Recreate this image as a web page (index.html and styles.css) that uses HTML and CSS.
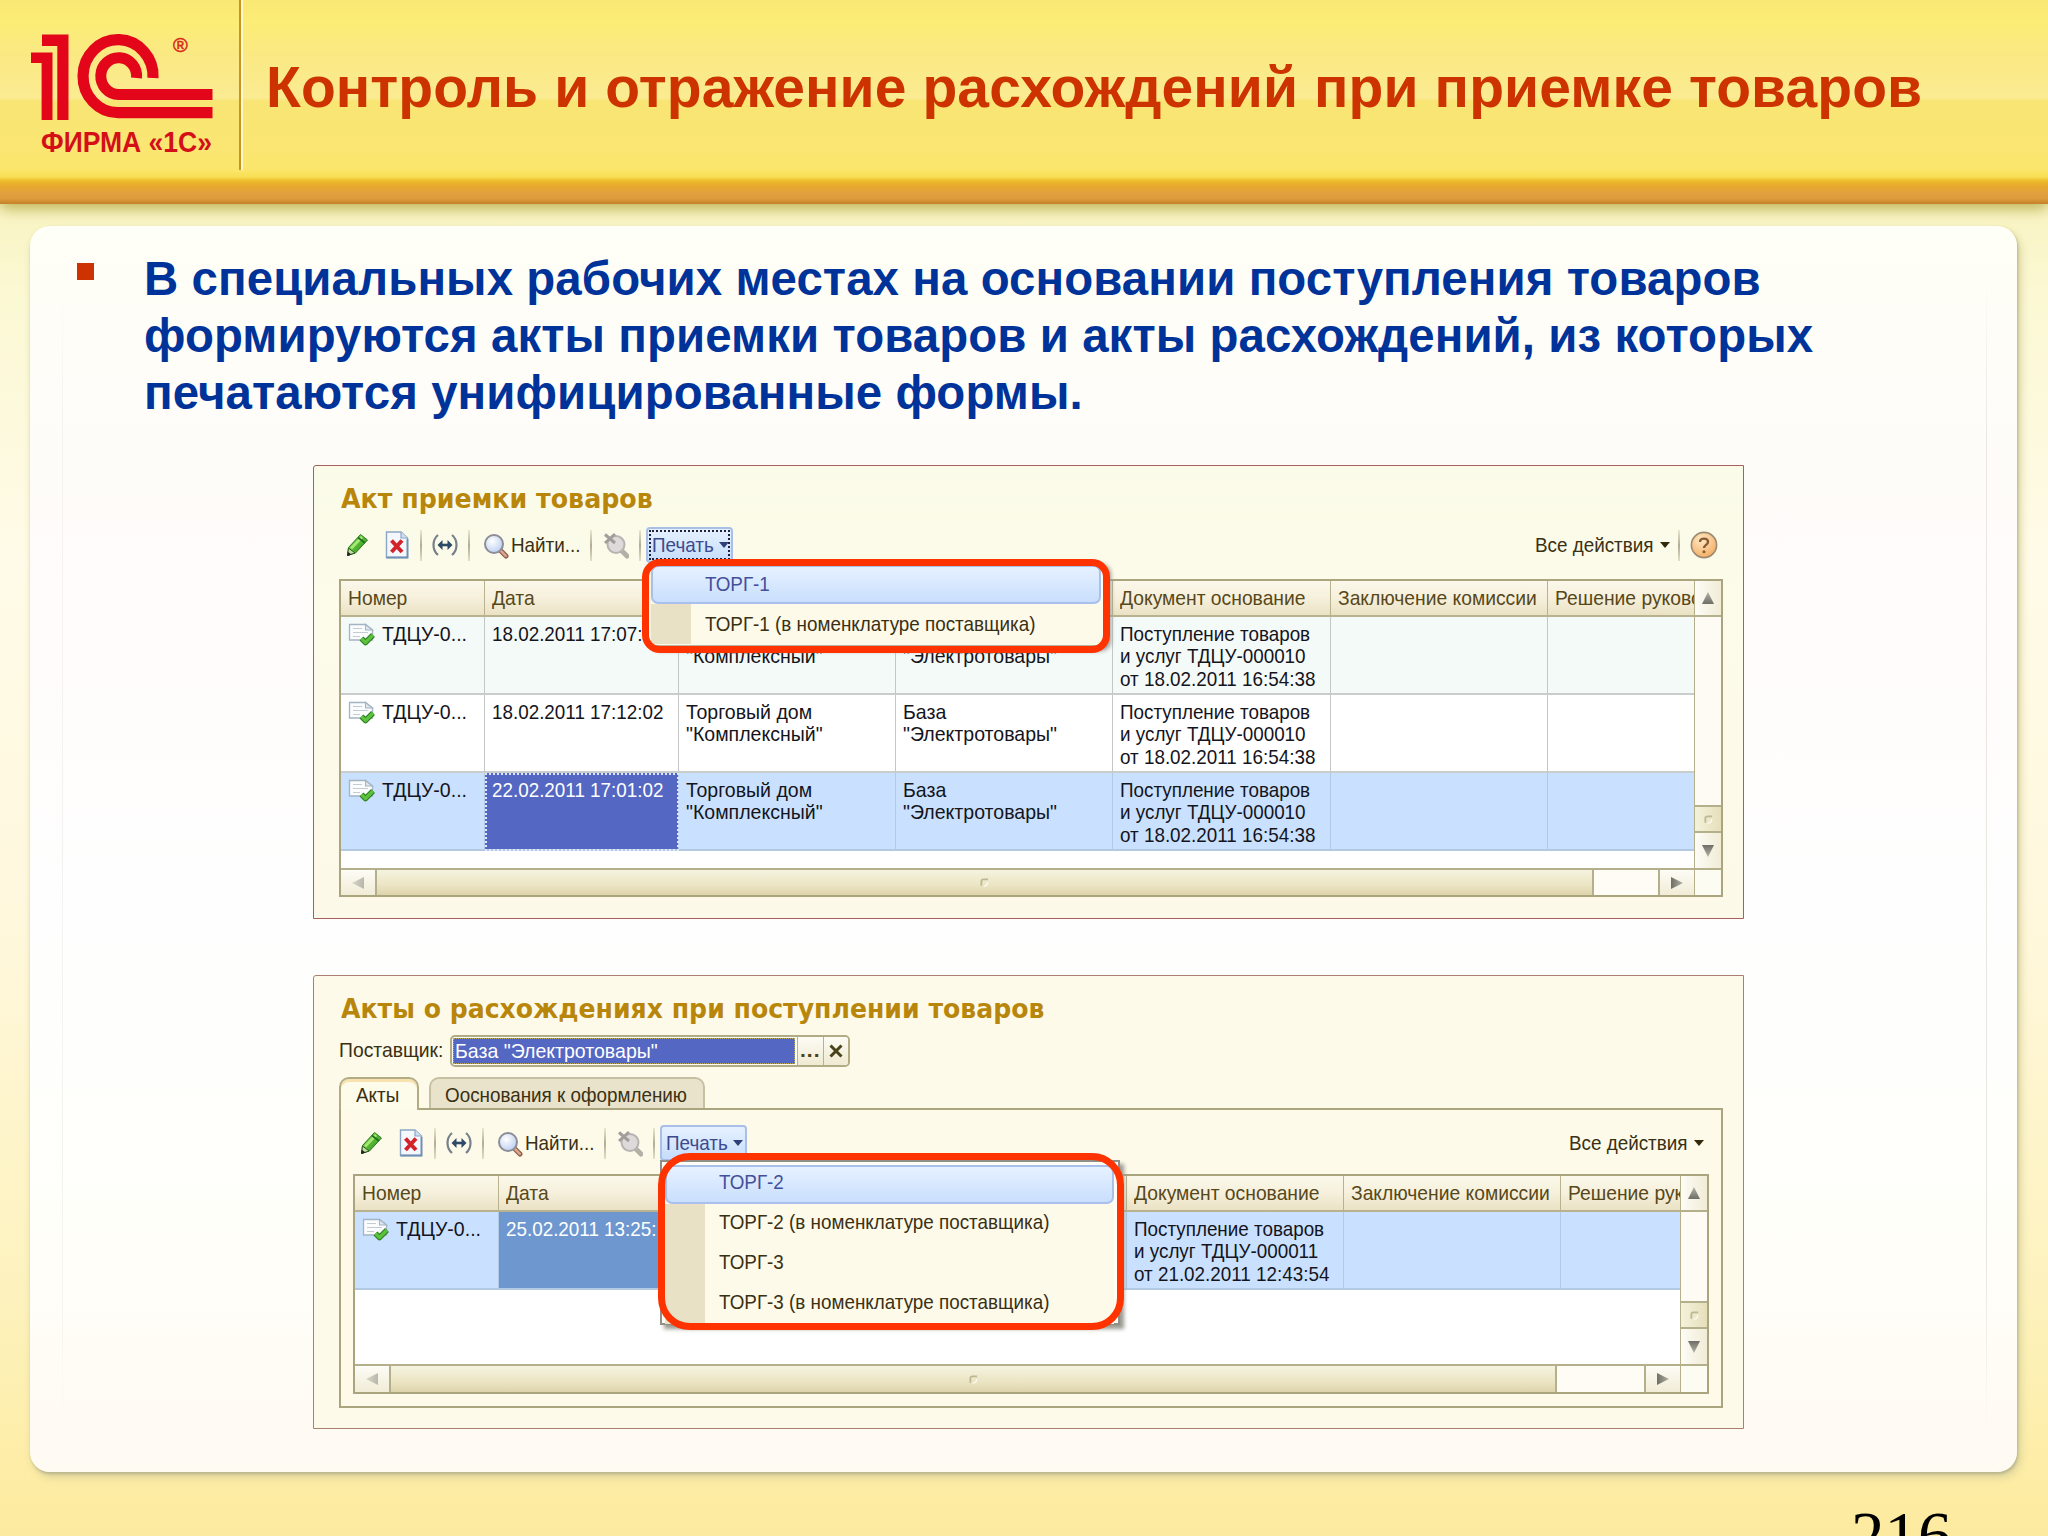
FILE: index.html
```html
<!DOCTYPE html>
<html lang="ru">
<head>
<meta charset="utf-8">
<title>Контроль и отражение расхождений при приемке товаров</title>
<link rel="stylesheet" href="styles.css">
</head>
<body>
<svg class="defs" width="0" height="0" aria-hidden="true">
  <defs>
    <linearGradient id="g-pencil" x1="0" y1="0" x2="1" y2="1"><stop offset="0" stop-color="#8fe04e"/><stop offset="1" stop-color="#1f8a1c"/></linearGradient>
    <radialGradient id="g-lens" cx=".4" cy=".35" r=".7"><stop offset="0" stop-color="#ffffff"/><stop offset="1" stop-color="#b9cdf0"/></radialGradient>
    <radialGradient id="g-help" cx=".4" cy=".3" r=".8"><stop offset="0" stop-color="#ffe9c4"/><stop offset="1" stop-color="#f3a75a"/></radialGradient>
    <linearGradient id="g-tri" x1="0" y1="0" x2="1" y2="0"><stop offset="0" stop-color="#6e6e66"/><stop offset="1" stop-color="#b4b3a6"/></linearGradient>
  </defs>
  <symbol id="i-pencil" viewBox="0 0 26 28">
    <path d="M2.500 24.500 L3.500 16.500 L15.500 3.500 L22.500 9 L10.500 22 Z" fill="url(#g-pencil)" stroke="#2c7a22" stroke-width="1"/>
    <path d="M6 17.500 L17 6" stroke="#a4ea74" stroke-width="2.600"/>
    <path d="M13 6.500 L20 12" stroke="#1c6e1a" stroke-width="1.600"/>
    <path d="M2.500 24.500 L3.500 17 L10 22 Z" fill="#bfe09a" stroke="#2f5b25" stroke-width="1"/>
    <path d="M2.200 25 L2.800 20.800 L6.500 23.500 Z" fill="#222"/>
  </symbol>
  <symbol id="i-delete" viewBox="0 0 26 28">
    <path d="M2.500 1 H17 L23.500 7 V26.500 H2.500 Z" fill="#f4f8fd" stroke="#8ba6c4" stroke-width="1.4"/>
    <path d="M17 1 V7 H23.500" fill="#cfe0f2" stroke="#8ba6c4" stroke-width="1.2"/>
    <path d="M2.500 26.500 H23.500 V8" fill="none" stroke="#6f90b4" stroke-width="1.8"/>
    <path d="M7.500 9.500 L18 21 M18 9.500 L7.500 21" stroke="#d2232a" stroke-width="4"/>
  </symbol>
  <symbol id="i-width" viewBox="0 0 26 28">
    <path d="M6 4 C0 9 0 19 6 24 M20 4 C26 9 26 19 20 24" fill="none" stroke="#77808a" stroke-width="2.200"/>
    <path d="M8 14 H18" stroke="#2d4a66" stroke-width="2.600"/>
    <path d="M10.500 9 L5.500 14 L10.500 19 Z M15.500 9 L20.500 14 L15.500 19 Z" fill="#2d4a66"/>
  </symbol>
  <symbol id="i-find" viewBox="0 0 26 28">
    <path d="M17 19 L23 25" stroke="#8a5f4b" stroke-width="5" stroke-linecap="round"/>
    <path d="M17.500 19.500 L22.800 24.800" stroke="#dba68b" stroke-width="2.600" stroke-linecap="round"/>
    <circle cx="11" cy="13" r="9" fill="url(#g-lens)" stroke="#8d8d98" stroke-width="2"/>
  </symbol>
  <symbol id="i-unfind" viewBox="0 0 26 28">
    <path d="M18 19 L24 25" stroke="#b4b0a8" stroke-width="5" stroke-linecap="round"/>
    <circle cx="13" cy="13.500" r="8.500" fill="#dedada" stroke="#b7b3b1" stroke-width="2"/>
    <path d="M2 3.500 L12 12 M12 3 L2 12" stroke="#a19d9b" stroke-width="3"/>
  </symbol>
  <symbol id="i-doc" viewBox="0 0 28 24">
    <path d="M1.500 1.500 H17.500 L24.500 7 V17 H1.500 Z" fill="#fbfcfd" stroke="#a3b4c4" stroke-width="1.300"/>
    <path d="M17.500 1.500 V7 H24.500 Z" fill="#dfe8f0" stroke="#a3b4c4" stroke-width="1.100"/>
    <path d="M5 5.500 H14 M5 9.500 H20 M5 13.500 H12" stroke="#c4ccd2" stroke-width="1.200"/>
    <path d="M13.500 15.500 L17.500 19.500 L25 12" fill="none" stroke="#2c7d21" stroke-width="5.500" stroke-linejoin="round"/>
    <path d="M13.500 15.500 L17.500 19.500 L25 12" fill="none" stroke="#5cc23e" stroke-width="3.200" stroke-linejoin="round"/>
  </symbol>
  <symbol id="i-help" viewBox="0 0 28 28">
    <circle cx="14" cy="14" r="12.600" fill="url(#g-help)" stroke="#9c8a72" stroke-width="1.600"/>
    <path d="M10 11 C10 6.500 18 6.500 18 11 C18 14 14 13.800 14 17" fill="none" stroke="#8a5a30" stroke-width="2.400"/>
    <circle cx="14" cy="20.800" r="1.500" fill="#8a5a30"/>
  </symbol>
  <symbol id="i-tri" viewBox="0 0 12 12"><path d="M0 0 L12 6 L0 12 Z" fill="url(#g-tri)"/></symbol>
  <symbol id="i-grip" viewBox="0 0 10 10"><path d="M1.500 8.500 V4 Q1.500 1.500 4 1.500 H9" fill="none" stroke="#bdb893" stroke-width="2"/><path d="M4 9 Q8.500 9 8.500 4.500" fill="none" stroke="#fbfaf0" stroke-width="1.500"/></symbol>
</svg>

<header class="header">
  <div class="brand">
    <svg class="logo" viewBox="0 0 240 170" width="240" height="170">
      <path d="M42 34.500 H68.500 V120 H57.300 V46 H42 Z M31 52.500 H52.500 V120 H41.600 V63 H31 Z" fill="#e3061a"/>
      <path d="M153 78 A35 36.500 0 1 0 118 112.700 H212.500" fill="none" stroke="#e3061a" stroke-width="11.200"/>
      <path d="M136.500 78 A17.900 18.400 0 1 0 118.500 94.500 H212.500" fill="none" stroke="#e3061a" stroke-width="11"/>
      <text x="173" y="52" class="logo-reg">®</text>
      <text x="41" y="152" class="logo-text" textLength="171" lengthAdjust="spacingAndGlyphs">ФИРМА «1С»</text>
    </svg>
  </div>
  <h1 class="title">Контроль и отражение расхождений при приемке товаров</h1>
</header>

<main class="card">
  <div class="lead">
    <span class="bullet"></span>
    <p class="lead-text">В специальных рабочих местах на основании поступления товаров<br>формируются акты приемки товаров и акты расхождений, из которых<br>печатаются унифицированные формы.</p>
  </div>

  <section class="panel">
    <h2 class="panel-title">Акт приемки товаров</h2>
    <div class="toolbar">
      <svg class="ico"><use href="#i-pencil"/></svg>
      <svg class="ico"><use href="#i-delete"/></svg>
      <i class="sep"></i>
      <svg class="ico"><use href="#i-width"/></svg>
      <i class="sep"></i>
      <svg class="ico"><use href="#i-find"/></svg>
      <span class="n">Найти...</span>
      <i class="sep"></i>
      <svg class="ico"><use href="#i-unfind"/></svg>
      <i class="sep"></i>
      <span class="print print-focus"><span class="n">Печать</span><i class="caret"></i></span>
      <div class="actions"><span class="n actions-text">Все действия</span><i class="caret dark"></i><i class="sep sep-help"></i><svg class="help"><use href="#i-help"/></svg></div>
    </div>
    <div class="table table-a">
      <div class="grid">
        <div class="row head"><div class="cell"><span class="n">Номер</span></div><div class="cell"><span class="n">Дата</span></div><div class="cell"></div><div class="cell"></div><div class="cell"><span class="n">Документ основание</span></div><div class="cell"><span class="n">Заключение комиссии</span></div><div class="cell"><span class="n">Решение руководителя</span></div></div>
        <div class="row alt"><div class="cell first"><svg class="doc"><use href="#i-doc"/></svg><span class="n wide">ТДЦУ-0...</span></div><div class="cell"><span class="n">18.02.2011 17:07:</span></div><div class="cell"><span class="n wide"><br>"Комплексный"</span></div><div class="cell"><span class="n wide"><br>"Электротовары"</span></div><div class="cell"><span class="n">Поступление товаров<br>и услуг ТДЦУ-000010<br>от 18.02.2011 16:54:38</span></div><div class="cell"></div><div class="cell"></div></div>
        <div class="row"><div class="cell first"><svg class="doc"><use href="#i-doc"/></svg><span class="n wide">ТДЦУ-0...</span></div><div class="cell"><span class="n">18.02.2011 17:12:02</span></div><div class="cell"><span class="n wide">Торговый дом<br>"Комплексный"</span></div><div class="cell"><span class="n wide">База<br>"Электротовары"</span></div><div class="cell"><span class="n">Поступление товаров<br>и услуг ТДЦУ-000010<br>от 18.02.2011 16:54:38</span></div><div class="cell"></div><div class="cell"></div></div>
        <div class="row sel"><div class="cell first"><svg class="doc"><use href="#i-doc"/></svg><span class="n wide">ТДЦУ-0...</span></div><div class="cell active"><span class="n">22.02.2011 17:01:02</span></div><div class="cell"><span class="n wide">Торговый дом<br>"Комплексный"</span></div><div class="cell"><span class="n wide">База<br>"Электротовары"</span></div><div class="cell"><span class="n">Поступление товаров<br>и услуг ТДЦУ-000010<br>от 18.02.2011 16:54:38</span></div><div class="cell"></div><div class="cell"></div></div>
      </div>
      <div class="vscroll"><span class="btn"><svg class="tri up"><use href="#i-tri"/></svg></span><span class="track"></span><span class="thumb"><svg class="grip"><use href="#i-grip"/></svg></span><span class="btn down-btn"><svg class="tri down"><use href="#i-tri"/></svg></span></div>
      <div class="hscroll"><span class="btn"><svg class="tri left"><use href="#i-tri"/></svg></span><span class="thumb"><svg class="grip"><use href="#i-grip"/></svg></span><span class="track"></span><span class="btn"><svg class="tri"><use href="#i-tri"/></svg></span></div>
      <div class="corner"></div>
    </div>
    <div class="menu menu-a">
      <div class="item on"><span class="n">ТОРГ-1</span></div>
      <div class="item"><span class="n">ТОРГ-1 (в номенклатуре поставщика)</span></div>
    </div>
    <div class="ring ring-a"></div>
  </section>

  <section class="panel panel-b">
    <h2 class="panel-title">Акты о расхождениях при поступлении товаров</h2>
    <div class="field">
      <span class="n label">Поставщик:</span>
      <div class="input"><span class="value"><span class="n wide">База "Электротовары"</span></span><span class="pick">...</span><span class="clear"><svg width="14" height="14" viewBox="0 0 14 14"><path d="M1.500 1.500 L12.500 12.500 M12.500 1.500 L1.500 12.500" stroke="#4a421a" stroke-width="3"/></svg></span></div>
    </div>
    <div class="tabs"><span class="tab tab-on"><span class="n">Акты</span></span><span class="tab tab-off"><span class="n">Ооснования к оформлению</span></span></div>
    <div class="frame">
      <div class="toolbar">
        <svg class="ico"><use href="#i-pencil"/></svg>
        <svg class="ico"><use href="#i-delete"/></svg>
        <i class="sep"></i>
        <svg class="ico"><use href="#i-width"/></svg>
        <i class="sep"></i>
        <svg class="ico"><use href="#i-find"/></svg>
        <span class="n">Найти...</span>
        <i class="sep"></i>
        <svg class="ico"><use href="#i-unfind"/></svg>
        <i class="sep"></i>
        <span class="print"><span class="n">Печать</span><i class="caret"></i></span>
        <div class="actions"><span class="n actions-text">Все действия</span><i class="caret dark"></i></div>
      </div>
      <div class="table table-b">
        <div class="grid">
          <div class="row head"><div class="cell"><span class="n">Номер</span></div><div class="cell"><span class="n">Дата</span></div><div class="cell"></div><div class="cell"></div><div class="cell"><span class="n">Документ основание</span></div><div class="cell"><span class="n">Заключение комиссии</span></div><div class="cell"><span class="n">Решение руководителя</span></div></div>
          <div class="row sel"><div class="cell first"><svg class="doc"><use href="#i-doc"/></svg><span class="n wide">ТДЦУ-0...</span></div><div class="cell active"><span class="n">25.02.2011 13:25:</span></div><div class="cell"></div><div class="cell"></div><div class="cell"><span class="n">Поступление товаров<br>и услуг ТДЦУ-000011<br>от 21.02.2011 12:43:54</span></div><div class="cell"></div><div class="cell"></div></div>
        </div>
        <div class="vscroll"><span class="btn"><svg class="tri up"><use href="#i-tri"/></svg></span><span class="track"></span><span class="thumb"><svg class="grip"><use href="#i-grip"/></svg></span><span class="btn down-btn"><svg class="tri down"><use href="#i-tri"/></svg></span></div>
        <div class="hscroll"><span class="btn"><svg class="tri left"><use href="#i-tri"/></svg></span><span class="thumb"><svg class="grip"><use href="#i-grip"/></svg></span><span class="track"></span><span class="btn"><svg class="tri"><use href="#i-tri"/></svg></span></div>
        <div class="corner"></div>
      </div>
    </div>
    <div class="menu menu-b">
      <div class="item on"><span class="n">ТОРГ-2</span></div>
      <div class="item"><span class="n">ТОРГ-2 (в номенклатуре поставщика)</span></div>
      <div class="item"><span class="n">ТОРГ-3</span></div>
      <div class="item"><span class="n">ТОРГ-3 (в номенклатуре поставщика)</span></div>
    </div>
    <div class="ring ring-b"></div>
  </section>
</main>
<footer class="footer">216</footer>
</body>
</html>
```
FILE: styles.css
```css
* { box-sizing: border-box; }

body {
  margin: 0;
  width: 2048px;
  height: 1536px;
  overflow: hidden;
  display: flex;
  flex-direction: column;
  font-family: "Liberation Sans", Arial, sans-serif;
  background: linear-gradient(#f9f4c3 204px, #fbf8d4 300px, #fffbe8 560px, #fff8de 900px, #fdf2bd 1300px, #fdeca2 1500px, #fceaa0 1536px);
}
.defs { position: absolute; }

/* Slide header */
.header {
  flex: none;
  height: 204px;
  display: flex;
  background: linear-gradient(#fae873 0, #fbed76 22px, #fae983 55px, #fbeb92 98px, #f9e574 101px, #fae671 150px, #fbe66b 170px, #f8de52 177px, #edbb2b 181px, #e7a92d 186px, #e1a23f 193px, #dd9b3c 199px, #c9842b 203px);
  box-shadow: 0 4px 14px #b9ae4c;
}
.brand {
  width: 241px;
  height: 170px;
  border-right: 2px solid #c8961e;
  box-shadow: 2px 0 0 #fff8cf;
}
.logo { display: block; }
.logo-reg { font-size: 20px; fill: #d8281c; stroke: #d8281c; stroke-width: .5px; }
.logo-text { font-size: 29px; font-weight: bold; fill: #d40f18; }
.title {
  margin: 55px 0 0 25px;
  font-size: 57px;
  line-height: 64px;
  letter-spacing: .1px;
  font-weight: bold;
  color: #cc3300;
  white-space: nowrap;
}

/* White slide area */
.card {
  flex: none;
  position: relative;
  margin: 22px 0 0 30px;
  width: 1987px;
  height: 1246px;
  border-radius: 20px;
  background: linear-gradient(#fefff6 0, #fefdf8 120px, #fffcfb 400px, #fefefe 700px, #fffffa 1000px, #fffaf2 1246px);
  box-shadow: 1px 2px 3px #b9b48e, 3px 5px 10px #d8d09a;
}
/* Hairline guides along both sides of the slide area */
.card::before, .card::after {
  content: "";
  position: absolute;
  top: 50px;
  bottom: 34px;
  width: 1px;
  background: linear-gradient(transparent, #e9e6e2 15%, #e9e6e2 85%, transparent);
}
.card::before { left: 32px; opacity: .5; }
.card::after { right: 30px; }
.lead { display: flex; height: 239px; padding: 24px 0 0 47px; }
.bullet { width: 17px; height: 17px; margin: 13px 50px 0 0; background: #cc3300; }
.lead-text {
  margin: 0;
  font-size: 47.400px;
  line-height: 57px;
  letter-spacing: .08px;
  font-weight: bold;
  color: #003399;
  white-space: nowrap;
}

/* Application windows */
.panel {
  position: relative;
  margin-left: 283px;
  width: 1431px;
  height: 454px;
  padding: 0 20px 0 25px;
  border: 1px solid #a5605c;
  border-radius: 3px 0 0 0;
  background: linear-gradient(#fafbe8, #fdfbea 30%, #fdf9e8);
  font-size: 21px;
  line-height: 22.300px;
  color: #3a3014;
}
.panel-b { margin-top: 56px; border-color: #a98070; background: #fdfae9; }
.panel-title {
  margin: 0 0 0 2px;
  padding-top: 17px;
  height: 61px;
  font: bold 27px/32px "DejaVu Sans", Verdana, sans-serif;
  color: #b8860b;
  white-space: nowrap;
  transform: scaleX(.937);
  transform-origin: 0 50%;
}
/* Interface text is set slightly condensed */
.n {
  display: inline-block;
  white-space: nowrap;
  transform: scaleX(.897);
  transform-origin: 0 50%;
}
.n.wide { transform: scaleX(.93); }
.head .n { transform: scaleX(.918); }

.toolbar {
  height: 36px;
  margin-bottom: 16px;
  padding-left: 6px;
  display: grid;
  grid-template-columns: 39px 36px 12px 36px 15px 28px 79px 13px 36px 7px 87px 1fr;
  align-items: center;
}
.ico { width: 26px; height: 28px; }
.sep { width: 2px; height: 31px; background: linear-gradient(#eae6cf, #b1ad96, #e4e0c8); }
.print {
  width: 87px;
  height: 36px;
  padding-left: 4px;
  display: flex;
  align-items: center;
  color: #3d4a8c;
  border: 2px solid #a9bfe8;
  border-radius: 4px;
  background: linear-gradient(#e6f1ff, #c6ddfd);
  outline-offset: -5px;
}
.print .n { width: 67px; }
.print-focus { outline: 2px dotted #1c2240; }
.caret { width: 0; height: 0; border: 5px solid transparent; border-top: 6px solid #2f3f78; border-bottom: 0; }
.caret.dark { border-top-color: #33290c; }
.actions { justify-self: end; display: flex; align-items: center; }
.frame .actions { margin-right: 5px; }
.actions-text { width: 125px; }
.sep-help { margin: 0 10px 0 8px; }
.help { width: 28px; height: 28px; margin-right: 5px; }

.table {
  display: grid;
  border: 2px solid #aaa57f;
  background: #fff;
}
.table-a { width: 1384px; height: 318px; grid-template: 287px 27px / 1353px 27px; }
.table-b { width: 1356px; height: 220px; grid-template: 188px 28px / 1325px 27px; }
.grid { overflow: hidden; }
.row { display: grid; height: 78px; }
.table-a .row { grid-template-columns: 144px 194px 217px 217px 218px 217px 146px; }
.table-b .row { grid-template-columns: 144px 194px 217px 217px 217px 217px 119px; }
.cell {
  padding: 6px 0 0 7px;
  overflow: hidden;
  border-right: 1px solid #c3c8c6;
  border-bottom: 2px solid #c9cdcc;
  color: #14141c;
}
.row .cell:last-child { border-right: 0; }
.head { height: 36px; }
.head .cell {
  padding-top: 6px;
  color: #57481a;
  background: linear-gradient(#fbf8ea, #f6f0dc 50%, #ebe2c4);
  border-color: #b9b28e;
}
.alt .cell { background: #f4faf8; }
.sel .cell { background: #c9e1fe; border-color: #b2c9e4; }
.first { display: flex; }
.doc { flex: none; width: 28px; height: 24px; margin: 0 6px 0 0; }
.row .active { color: #fff; background: #5467c2; }
.table-a .active { outline: 2px dotted #dfe6ff; outline-offset: -2px; }
.table-b .row .active { background: #6e97d0; }

.btn, .thumb, .track { display: flex; align-items: center; justify-content: center; }
.btn { flex: none; background: linear-gradient(#fdfcf6, #f1ecd6); }
.tri { width: 12px; height: 12px; }
.tri.up { transform: rotate(-90deg); }
.tri.down { transform: rotate(90deg); }
.tri.left { transform: rotate(180deg); opacity: .45; }
.grip { width: 9px; height: 9px; }
.vscroll { display: flex; flex-direction: column; border-left: 1px solid #b5b08c; }
.vscroll .btn { height: 36px; border-bottom: 2px solid #b5b08c; background: linear-gradient(90deg, #fdfcf6, #f1ecd6); }
.vscroll .down-btn { height: 35px; border-bottom: 0; }
.vscroll .track { flex: 1; background: #fdfbf4; }
.vscroll .thumb { height: 28px; border: solid #b5b08c; border-width: 2px 0; background: linear-gradient(90deg, #f4f2dc, #e6dfba); }
.hscroll { display: flex; border-top: 2px solid #b5b08c; }
.hscroll .btn { width: 36px; border-left: 2px solid #b5b08c; }
.hscroll .btn:first-child { width: 34px; border-left: 0; }
.hscroll .thumb { flex: none; width: 1219px; border: solid #b5b08c; border-width: 0 2px; background: linear-gradient(#f5f3e0, #ece5c4 60%, #ded4ab); }
.table-b .hscroll .thumb { width: 1168px; }
.hscroll .track { flex: 1; background: #fefcf5; }
.corner { border: solid #b5b08c; border-width: 2px 0 0 1px; background: #fdfcf2; }

/* Drop-down menus lie over the tables, with a highlight ring on top */
.menu {
  position: absolute;
  padding: 3px 4px 2px 3px;
  background: #fefaea;
  border: 2px solid #8f8f88;
  box-shadow: 4px 4px 4px #9a9a92;
}
.menu-a { left: 332px; top: 94px; width: 461px; height: 87px; border-color: #b8b4a0; border-radius: 10px; }
.menu-b { left: 346px; top: 184px; width: 460px; height: 165px; background: #fffdf4; }
.item {
  height: 40px;
  padding: 8px 0 0 54px;
  background: linear-gradient(90deg, #e8e1c6 40px, #fefaea 40px);
}
.menu-a .item + .item { padding-top: 9px; }
.on {
  height: 39px;
  padding: 6px 0 0 52px;
  color: #444f9c;
  border: 2px solid #a9bfec;
  border-radius: 7px;
  background: linear-gradient(#e6f1ff, #c9dffd);
}
.menu-b .on { padding-top: 4px; }
.menu-b .item + .item { padding-top: 7px; }
.ring { position: absolute; border: 7px solid #ff3300; }
.ring-a { left: 328px; top: 93px; width: 468px; height: 94px; border-radius: 18px; }
.ring-b { left: 344px; top: 177px; width: 466px; height: 177px; border-radius: 32px; }

/* Second window: supplier field and tabs */
.panel-b .panel-title { height: 58px; transform: scaleX(.932); }
.field { display: flex; height: 33px; align-items: center; }
.label { width: 111px; }
.label.n { transform: scaleX(.92); }
.input {
  width: 400px;
  height: 32px;
  display: flex;
  border: 2px solid #b1ab86;
  border-radius: 5px;
  overflow: hidden;
  background: #fdfcf2;
}
.value {
  width: 342px;
  margin: 1px 2px 1px 1px;
  padding: 2px 0 0 2px;
  color: #fff;
  background: #5467c2;
  outline: 1px dotted #b8a860;
  outline-offset: -1px;
}
.pick, .clear { border-left: 1px solid #b8b28e; background: linear-gradient(#fdfcf4, #f0ead2); }
.pick { width: 26px; padding: 2px 0 0 2px; font-weight: bold; letter-spacing: 1px; color: #4a421a; }
.clear { flex: 1; display: flex; align-items: center; justify-content: center; }
.tabs { display: flex; gap: 10px; margin-top: 10px; height: 31px; }
.tab { border: 2px solid #b1ab86; border-bottom: 0; border-radius: 10px 10px 0 0; padding-top: 5px; }
.tab-on {
  position: relative;
  z-index: 1;
  width: 80px;
  height: 33px;
  padding-left: 15px;
  background: #fdfbea;
  border-color: #b1ab86;
  box-shadow: inset 0 3px 0 #f8e3b0;
}
.tab-off { width: 276px; padding-left: 14px; background: #e9e3cb; border-color: #c6c0a2; }
.frame {
  width: 1384px;
  height: 300px;
  padding: 15px 12px 0 12px;
  border: 2px solid #aaa57f;
}
.frame .toolbar { margin-bottom: 13px; }

.footer {
  flex: none;
  height: 64px;
  padding: 25px 0 0 1851px;
  overflow: hidden;
  font: 67px/76px "Liberation Serif", "Times New Roman", serif;
  color: #000;
}
```
